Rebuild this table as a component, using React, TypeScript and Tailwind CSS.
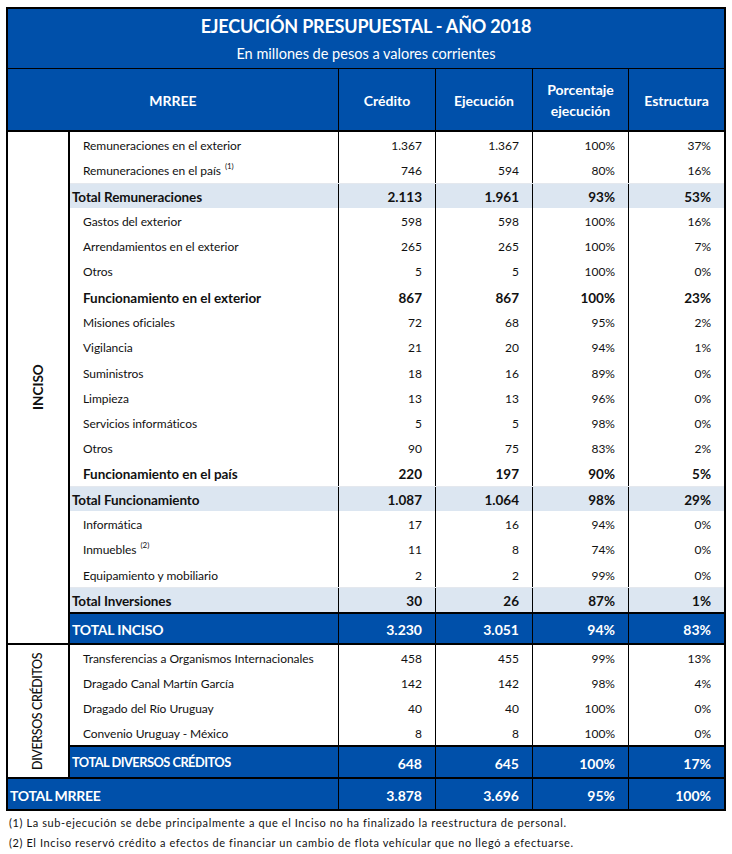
import React from "react";

type Row = {
  label: string;
  sup?: string;
  v: [string, string, string, string];
  kind?: "item" | "sub" | "total";
};

const inciso: Row[] = [
  { label: "Remuneraciones en el exterior", v: ["1.367", "1.367", "100%", "37%"] },
  { label: "Remuneraciones en el país", sup: "(1)", v: ["746", "594", "80%", "16%"] },
  { label: "Total Remuneraciones", v: ["2.113", "1.961", "93%", "53%"], kind: "total" },
  { label: "Gastos del exterior", v: ["598", "598", "100%", "16%"] },
  { label: "Arrendamientos en el exterior", v: ["265", "265", "100%", "7%"] },
  { label: "Otros", v: ["5", "5", "100%", "0%"] },
  { label: "Funcionamiento en el exterior", v: ["867", "867", "100%", "23%"], kind: "sub" },
  { label: "Misiones oficiales", v: ["72", "68", "95%", "2%"] },
  { label: "Vigilancia", v: ["21", "20", "94%", "1%"] },
  { label: "Suministros", v: ["18", "16", "89%", "0%"] },
  { label: "Limpieza", v: ["13", "13", "96%", "0%"] },
  { label: "Servicios informáticos", v: ["5", "5", "98%", "0%"] },
  { label: "Otros", v: ["90", "75", "83%", "2%"] },
  { label: "Funcionamiento en el país", v: ["220", "197", "90%", "5%"], kind: "sub" },
  { label: "Total Funcionamiento", v: ["1.087", "1.064", "98%", "29%"], kind: "total" },
  { label: "Informática", v: ["17", "16", "94%", "0%"] },
  { label: "Inmuebles", sup: "(2)", v: ["11", "8", "74%", "0%"] },
  { label: "Equipamiento y mobiliario", v: ["2", "2", "99%", "0%"] },
  { label: "Total Inversiones", v: ["30", "26", "87%", "1%"], kind: "total" },
];

const diversos: Row[] = [
  { label: "Transferencias a Organismos Internacionales", v: ["458", "455", "99%", "13%"] },
  { label: "Dragado Canal Martín García", v: ["142", "142", "98%", "4%"] },
  { label: "Dragado del Río Uruguay", v: ["40", "40", "100%", "0%"] },
  { label: "Convenio Uruguay - México", v: ["8", "8", "100%", "0%"] },
];

const numW = ["w-[97px] border-r", "w-[97px] border-r", "w-[96px] border-r", "w-[95px]"];

function DataRow({ row, h }: { row: Row; h: string }) {
  const total = row.kind === "total";
  const bold = row.kind === "total" || row.kind === "sub";
  return (
    <div
      className={`flex ${h} ${total ? "bg-[#dce6f1] border-t border-[#e4e8ee]" : ""} ${
        bold ? "font-bold text-[13.5px]" : "text-[12px]"
      }`}
    >
      <div
        className={`w-[269px] border-r border-black flex items-center pt-[3px] ${
          total ? "pl-[2px] tracking-[-0.1px]" : "pl-[13px] tracking-[-0.05px]"
        }`}
      >
        {row.label}
        {row.sup && <sup className="ml-[4px] text-[8px] -top-[5px]">{row.sup}</sup>}
      </div>
      {row.v.map((v, i) => (
        <div key={i} className={`${numW[i]} border-black flex items-center justify-end pr-[13px] pt-[3px]`}>
          {v}
        </div>
      ))}
    </div>
  );
}

function BlueRow({
  label,
  v,
  labelW,
  h,
  labelCls,
}: {
  label: string;
  v: string[];
  labelW: string;
  h: string;
  labelCls: string;
}) {
  return (
    <div className={`flex ${h} bg-[#0050aa] text-white font-bold text-[14px]`}>
      <div className={`${labelW} border-r border-black flex items-center pl-[2px] pt-[2px] ${labelCls}`}>{label}</div>
      {v.map((x, i) => (
        <div key={i} className={`${numW[i]} border-black flex items-center justify-end pr-[13px] pt-[2px]`}>
          {x}
        </div>
      ))}
    </div>
  );
}

export default function App() {
  return (
    <div
      className="bg-white w-[732px] h-[854px] pt-[7px] pl-[6px] text-[#111]"
      style={{ fontFamily: "Lato, 'Open Sans', sans-serif" }}
    >
      <div className="w-[720px] border-2 border-black">
        {/* Title */}
        <div className="bg-[#0050aa] text-white text-center h-[60px] border-b-[1.5px] border-black">
          <div className="h-[33px] flex items-center justify-center text-[18px] tracking-[-0.2px] font-bold pt-[1px]">
            EJECUCIÓN PRESUPUESTAL - AÑO 2018
          </div>
          <div className="h-[24px] flex items-center justify-center text-[14.5px]">
            En millones de pesos a valores corrientes
          </div>
        </div>

        {/* Column headers */}
        <div className="flex h-[63px] bg-[#0050aa] text-white font-bold text-[14px] border-b-2 border-black leading-[21px]">
          <div className="w-[331px] border-r border-black flex items-center justify-center pt-[2px]">MRREE</div>
          <div className="w-[97px] border-r border-black flex items-center justify-center pt-[2px]">Crédito</div>
          <div className="w-[97px] border-r border-black flex items-center justify-center pt-[2px]">Ejecución</div>
          <div className="w-[96px] border-r border-black flex items-center justify-center text-center">
            Porcentaje
            <br />
            ejecución
          </div>
          <div className="w-[95px] flex items-center justify-center pt-[2px]">Estructura</div>
        </div>

        {/* INCISO */}
        <div className="flex border-b-2 border-black">
          <div className="w-[62px] border-r-2 border-black flex items-center justify-center">
            <span className="-rotate-90 font-bold text-[13.5px] whitespace-nowrap">INCISO</span>
          </div>
          <div className="flex flex-col">
            {inciso.map((r, i) => (
              <DataRow key={i} row={r} h="h-[25.27px]" />
            ))}
            <div className="border-t-2 border-black">
              <BlueRow
                label="TOTAL INCISO"
                v={["3.230", "3.051", "94%", "83%"]}
                labelW="w-[269px]"
                h="h-[29px]"
                labelCls="tracking-[-0.2px]"
              />
            </div>
          </div>
        </div>

        {/* DIVERSOS CRÉDITOS */}
        <div className="flex border-b-2 border-black">
          <div className="w-[62px] border-r-2 border-black flex items-center justify-center">
            <span className="-rotate-90 text-[12.5px] font-medium tracking-[-0.4px] whitespace-nowrap">
              DIVERSOS CRÉDITOS
            </span>
          </div>
          <div className="flex flex-col">
            {diversos.map((r, i) => (
              <DataRow key={i} row={r} h="h-[25px]" />
            ))}
            <div className="border-t-2 border-black">
              <BlueRow
                label="TOTAL DIVERSOS CRÉDITOS"
                v={["648", "645", "100%", "17%"]}
                labelW="w-[269px]"
                h="h-[30px]"
                labelCls="text-[12.8px] tracking-[-0.5px]"
              />
            </div>
          </div>
        </div>

        {/* TOTAL MRREE */}
        <BlueRow
          label="TOTAL MRREE"
          v={["3.878", "3.696", "95%", "100%"]}
          labelW="w-[331px]"
          h="h-[30px]"
          labelCls="tracking-[-0.3px]"
        />
      </div>

      {/* Footnotes */}
      <div className="pl-[3px] text-[11px] tracking-[0.6px] leading-[20px] pt-[2px] text-[#111]">
        <p>(1) La sub-ejecución se debe principalmente a que el Inciso no ha finalizado la reestructura de personal.</p>
        <p>(2) El Inciso reservó crédito a efectos de financiar un cambio de flota vehícular que no llegó a efectuarse.</p>
      </div>
    </div>
  );
}
